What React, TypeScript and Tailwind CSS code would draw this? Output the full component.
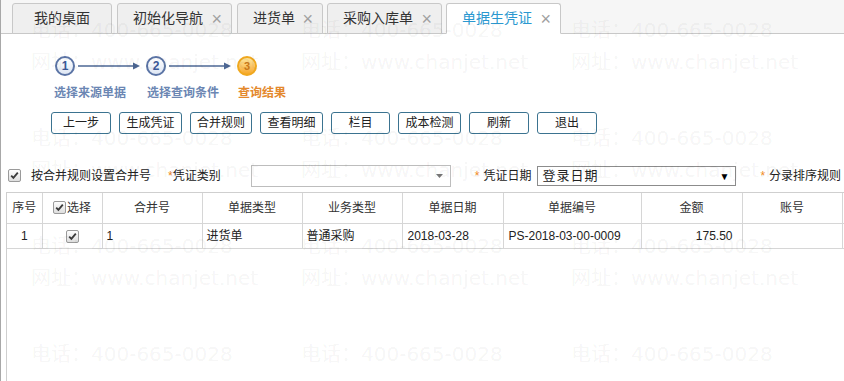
import React from 'react';

const tabs = [
  { label: '我的桌面', w: 'w-[100px]', close: false },
  { label: '初始化导航', w: 'w-[115px]', close: true },
  { label: '进货单', w: 'w-[86px]', close: true },
  { label: '采购入库单', w: 'w-[115px]', close: true },
  { label: '单据生凭证', w: 'w-[115px]', close: true, active: true },
];

const buttons = [
  { label: '上一步', w: 'w-[60px]' },
  { label: '生成凭证', w: 'w-[63px]' },
  { label: '合并规则', w: 'w-[62px]' },
  { label: '查看明细', w: 'w-[63px]' },
  { label: '栏目', w: 'w-[59px]' },
  { label: '成本检测', w: 'w-[63px]' },
  { label: '刷新', w: 'w-[60px]' },
  { label: '退出', w: 'w-[60px]' },
];

const columns = [
  { label: '序号', w: 35 },
  { label: '选择', w: 60, check: true },
  { label: '合并号', w: 100 },
  { label: '单据类型', w: 100 },
  { label: '业务类型', w: 100 },
  { label: '单据日期', w: 101 },
  { label: '单据编号', w: 138 },
  { label: '金额', w: 101 },
  { label: '账号', w: 100 },
  { label: '', w: 100 },
];

function CheckBox() {
  return (
    <span className="inline-flex w-[13px] h-[13px] items-center justify-center rounded-[2px] border border-[#9a9a9a] bg-gradient-to-b from-[#fdfdfd] to-[#dedede]">
      <svg width="9" height="9" viewBox="0 0 9 9">
        <path d="M1.2 4.6 L3.4 6.9 L7.8 1.6" fill="none" stroke="#3a3a3a" strokeWidth="1.8" />
      </svg>
    </span>
  );
}

function StepCircle({ n, active }: { n: number; active?: boolean }) {
  return (
    <div
      className={
        active
          ? 'w-[20px] h-[20px] rounded-full border-2 border-[#f0a81e] bg-gradient-to-b from-[#fde59a] to-[#f6a823] flex items-center justify-center text-[11px] font-bold text-[#c9781a]'
          : 'w-[20px] h-[20px] rounded-full border-2 border-[#5c75a6] bg-gradient-to-b from-white to-[#dfe7f4] flex items-center justify-center text-[12px] font-bold text-[#3d5a99]'
      }
    >
      {n}
    </div>
  );
}

function Arrow() {
  return (
    <svg width="71" height="10" viewBox="0 0 71 10" className="block">
      <line x1="3" y1="5" x2="62" y2="5" stroke="#4d6794" strokeWidth="1.3" />
      <path d="M58 1.5 L65 5 L58 8.5 Z" fill="#4d6794" />
    </svg>
  );
}

function Watermark() {
  const rows = [
    { y: 'top-[20px]', t: '电话：400-665-0028' },
    { y: 'top-[52px]', t: '网址：www.chanjet.net' },
    { y: 'top-[128px]', t: '电话：400-665-0028' },
    { y: 'top-[160px]', t: '网址：www.chanjet.net' },
    { y: 'top-[236px]', t: '电话：400-665-0028' },
    { y: 'top-[268px]', t: '网址：www.chanjet.net' },
    { y: 'top-[344px]', t: '电话：400-665-0028' },
  ];
  const xs = ['left-[30px]', 'left-[300px]', 'left-[570px]'];
  return (
    <div className="pointer-events-none absolute inset-0">
      {rows.map((r, i) =>
        xs.map((x) => (
          <div
            key={i + x}
            className={`absolute ${r.y} ${x} whitespace-nowrap text-[20px] leading-[20px] text-[rgba(0,0,0,0.055)] [font-family:'DejaVu_Sans','Noto_Sans_CJK_SC',sans-serif]`}
          >
            {r.t}
          </div>
        ))
      )}
    </div>
  );
}

export default function App() {
  return (
    <div className="relative w-[844px] h-[381px] overflow-hidden bg-white border-l border-[#a8a8a8] text-[12px] text-[#222] [font-family:'Liberation_Sans','Noto_Sans_CJK_SC',sans-serif]">
      {/* tab bar */}
      <div className="h-[34px] bg-[#f6f6f6] border-b border-[#c8c8c8] flex items-end pl-[11px]">
        {tabs.map((t, i) => (
          <div
            key={t.label}
            className={`${t.w} ${i > 0 ? (i >= 3 ? 'ml-[4px]' : 'ml-[5px]') : ''} h-[31px] -mb-px rounded-t-[3px] border border-[#c8c8c8] flex items-center text-[14px] ${
              t.active ? 'bg-white border-b-white text-[#2b98d0]' : 'bg-[#efefef] text-[#333]'
            } ${t.close ? 'pl-[15px] pr-[9px] justify-between' : 'justify-center'}`}
          >
            <span>{t.label}</span>
            {t.close && <span className="text-[#a0a0a0] text-[18px] font-light leading-none">×</span>}
          </div>
        ))}
      </div>

      {/* steps */}
      <div className="pl-[54px] pt-[22px] flex items-center">
        <StepCircle n={1} />
        <Arrow />
        <StepCircle n={2} />
        <Arrow />
        <StepCircle n={3} active />
      </div>
      <div className="flex mt-[9px] font-bold leading-[16px]">
        <span className="ml-[53px] w-[93px] text-[#6b86b3]">选择来源单据</span>
        <span className="w-[91px] text-[#6b86b3]">选择查询条件</span>
        <span className="text-[#e4892d]">查询结果</span>
      </div>

      {/* buttons */}
      <div className="flex gap-[8px] ml-[50px] mt-[11px]">
        {buttons.map((b) => (
          <button
            key={b.label}
            className={`${b.w} h-[22px] rounded-[3px] border border-[#3b7390] bg-white text-[12px] text-[#222] flex items-center justify-center`}
          >
            {b.label}
          </button>
        ))}
      </div>

      {/* filters */}
      <div className="flex items-center h-[22px] mt-[31px] whitespace-nowrap">
        <span className="ml-[7px]">
          <CheckBox />
        </span>
        <span className="ml-[10px]">按合并规则设置合并号</span>
        <span className="ml-[17px] text-[#f08a24]">*</span>
        <span>凭证类别</span>
        <div className="ml-[30px] w-[200px] h-[22px] border border-[#bdbdbd] bg-white flex items-center justify-end pr-[7px]">
          <svg width="7" height="4" viewBox="0 0 7 4">
            <path d="M0 0 H7 L3.5 4 Z" fill="#777" />
          </svg>
        </div>
        <span className="ml-[24px] text-[#f08a24]">*</span>
        <span className="ml-[4px]">凭证日期</span>
        <div className="ml-[6px] w-[199px] h-[20px] border border-[#8c8c8c] bg-white flex items-center justify-between pl-[4px] pr-[6px] text-[13px]">
          <span className="tracking-[1px]">登录日期</span>
          <span className="text-[10px] text-black">▼</span>
        </div>
        <span className="ml-[24px] text-[#f08a24]">*</span>
        <span className="ml-[4px]">分录排序规则</span>
      </div>

      {/* table */}
      <div className="ml-[5px] mt-[5px] h-[200px] border-l border-t border-[#cfcfcf] overflow-hidden">
        <table className="border-collapse table-fixed w-[935px]">
          <colgroup>
            {columns.map((c, i) => (
              <col key={i} style={{ width: c.w }} />
            ))}
          </colgroup>
          <thead>
            <tr className="h-[30px]">
              {columns.map((c, i) => (
                <th key={i} className="border-r border-b border-[#d6d6d6] font-normal text-[#333] text-center">
                  {c.check ? (
                    <span className="inline-flex items-center gap-[1px]">
                      <CheckBox />
                      <span>{c.label}</span>
                    </span>
                  ) : (
                    c.label
                  )}
                </th>
              ))}
            </tr>
          </thead>
          <tbody>
            <tr className="h-[25px] text-[#222]">
              <td className="border-r border-b border-[#d6d6d6] text-center">1</td>
              <td className="border-r border-b border-[#d6d6d6] text-center">
                <span className="inline-flex align-middle">
                  <CheckBox />
                </span>
              </td>
              <td className="border-r border-b border-[#d6d6d6] pl-[4px]">1</td>
              <td className="border-r border-b border-[#d6d6d6] pl-[4px]">进货单</td>
              <td className="border-r border-b border-[#d6d6d6] pl-[4px]">普通采购</td>
              <td className="border-r border-b border-[#d6d6d6] pl-[5px]">2018-03-28</td>
              <td className="border-r border-b border-[#d6d6d6] pl-[5px]">PS-2018-03-00-0009</td>
              <td className="border-r border-b border-[#d6d6d6] pr-[9px] text-right">175.50</td>
              <td className="border-r border-b border-[#d6d6d6]"></td>
              <td className="border-r border-b border-[#d6d6d6]"></td>
            </tr>
          </tbody>
        </table>
      </div>

      <Watermark />
    </div>
  );
}
